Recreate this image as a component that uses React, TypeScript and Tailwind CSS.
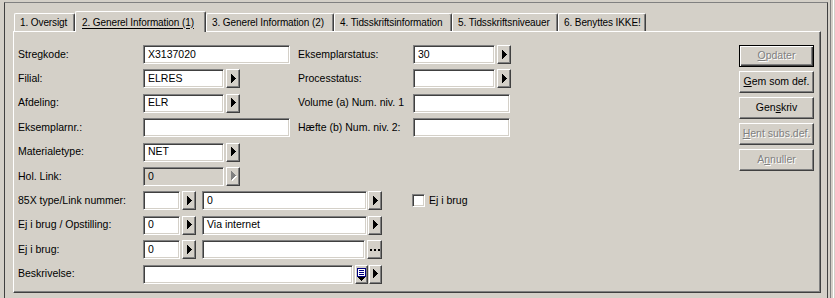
import React from 'react';

const sunken =
  'border border-t-[#808080] border-l-[#808080] border-r-white border-b-white shadow-[inset_1px_1px_#404040,inset_-1px_-1px_#d4d0c8]';
const raised =
  'border border-t-white border-l-white border-r-[#404040] border-b-[#404040] shadow-[inset_-1px_-1px_#808080]';
const greyText = 'text-[#808080] [text-shadow:1px_1px_#ffffff]';

const triPath = 'M0 0h1v1h1v1h1v1h1v1h1v1h-1v1h-1v1h-1v1h-1v1h-1z';

const Tri = ({ disabled }: { disabled?: boolean }) => (
  <svg width="6" height="10" viewBox="0 0 6 10" shapeRendering="crispEdges">
    {disabled && <path d={triPath} transform="translate(1 1)" fill="#ffffff" />}
    <path d={triPath} fill={disabled ? '#808080' : '#000000'} />
  </svg>
);

const ArrowBtn = ({ disabled, w = 'w-[14px]' }: { disabled?: boolean; w?: string }) => (
  <div className={`${w} h-[19px] flex-none flex items-center justify-center pl-[1px] bg-[#d4d0c8] ${raised}`}>
    <Tri disabled={disabled} />
  </div>
);

const Field = ({ w, value, disabled }: { w: string; value?: string; disabled?: boolean }) => (
  <div
    className={`${w} h-[19px] flex-none flex items-center pl-[4px] text-black ${sunken} ${
      disabled ? 'bg-[#d4d0c8]' : 'bg-white'
    }`}
  >
    {value}
  </div>
);

const Label = ({ children, w = 'w-[125px]' }: { children: React.ReactNode; w?: string }) => (
  <div className={`${w} flex-none whitespace-nowrap`}>{children}</div>
);

const Tab = ({ label, w, active }: { label: string; w: string; active?: boolean }) => (
  <div
    className={`${w} flex-none flex items-center whitespace-nowrap text-[10px] tracking-[-0.1px] bg-[#d4d0c8] border-l border-t border-l-white border-t-white border-r border-r-[#404040] shadow-[inset_-1px_0_#808080] rounded-tl-[2px] rounded-tr-[2px] ${
      active ? 'h-[21px] relative z-10 pl-[6px]' : 'h-[18px] mb-[1px] pl-[5px]'
    }`}
  >
    {active ? <span className="underline underline-offset-[2px]">{label}</span> : label}
  </div>
);

const SideButton = ({
  children,
  disabled,
  isDefault,
}: {
  children: React.ReactNode;
  disabled?: boolean;
  isDefault?: boolean;
}) => (
  <div
    className={`w-[75px] h-[22px] flex items-center justify-center bg-[#d4d0c8] ${
      isDefault ? 'border border-black shadow-[inset_1px_1px_#ffffff,inset_-1px_-1px_#404040,inset_-2px_-2px_#808080]' : raised
    } ${disabled ? greyText : 'text-black'}`}
  >
    {children}
  </div>
);

export default function App() {
  return (
    <div className="w-[835px] h-[298px] bg-[#d4d0c8] flex overflow-hidden text-[10.5px] text-black font-['Liberation_Sans',Arial,sans-serif]">
      <div className="flex-none w-[828px] pl-[4px] pt-[2px]">
        <div className="w-[824px] h-[296px] border-l border-t border-r border-l-[#404040] border-t-[#808080] border-r-[#404040]">
          <div className="pt-[8px] pl-[9px] flex items-end h-[29px]">
            <Tab label="1. Oversigt" w="w-[61px]" />
            <Tab label="2. Generel Information (1)" w="w-[131px]" active />
            <Tab label="3. Generel Information (2)" w="w-[128px]" />
            <Tab label="4. Tidsskriftsinformation" w="w-[118px]" />
            <Tab label="5. Tidsskriftsniveauer" w="w-[106px]" />
            <Tab label="6. Benyttes IKKE!" w="w-[88px]" />
          </div>
          <div className="ml-[8px] mt-[-1px] w-[808px] h-[262px] border border-t-white border-l-white border-r-[#404040] border-b-[#404040] shadow-[inset_-1px_-1px_#808080] flex justify-between pt-[13px] pl-[4px] pr-[6px]">
            <div className="flex flex-col gap-[5.4px]">
              <div className="flex items-center h-[19px]">
                <Label>Stregkode:</Label>
                <Field w="w-[147px]" value="X3137020" />
                <div className="w-[8px] flex-none" />
                <Label w="w-[115px]">Eksemplarstatus:</Label>
                <Field w="w-[82px]" value="30" />
                <div className="ml-[2px]"><ArrowBtn /></div>
              </div>
              <div className="flex items-center h-[19px]">
                <Label>Filial:</Label>
                <div className="w-[155px] flex-none flex items-center">
                  <Field w="w-[81px]" value="ELRES" />
                  <div className="ml-[2px]"><ArrowBtn /></div>
                </div>
                <Label w="w-[115px]">Processtatus:</Label>
                <Field w="w-[82px]" />
                <div className="ml-[2px]"><ArrowBtn /></div>
              </div>
              <div className="flex items-center h-[19px]">
                <Label>Afdeling:</Label>
                <div className="w-[155px] flex-none flex items-center">
                  <Field w="w-[81px]" value="ELR" />
                  <div className="ml-[2px]"><ArrowBtn /></div>
                </div>
                <Label w="w-[115px]">Volume (a) Num. niv. 1</Label>
                <Field w="w-[97px]" />
              </div>
              <div className="flex items-center h-[19px]">
                <Label>Eksemplarnr.:</Label>
                <Field w="w-[147px]" />
                <div className="w-[8px] flex-none" />
                <Label w="w-[115px]">Hæfte (b) Num. niv. 2:</Label>
                <Field w="w-[97px]" />
              </div>
              <div className="flex items-center h-[19px]">
                <Label>Materialetype:</Label>
                <Field w="w-[81px]" value="NET" />
                <div className="ml-[2px]"><ArrowBtn /></div>
              </div>
              <div className="flex items-center h-[19px]">
                <Label>Hol. Link:</Label>
                <Field w="w-[81px]" value="0" disabled />
                <div className="ml-[2px]"><ArrowBtn disabled /></div>
              </div>
              <div className="flex items-center h-[19px]">
                <Label>85X type/Link nummer:</Label>
                <Field w="w-[37px]" />
                <div className="ml-[2px]"><ArrowBtn /></div>
                <div className="ml-[6px]"><Field w="w-[165px]" value="0" /></div>
                <div className="ml-[1px]"><ArrowBtn /></div>
                <div className={`ml-[30px] w-[13px] h-[13px] bg-white ${sunken}`} />
                <div className="ml-[4px] whitespace-nowrap">Ej i brug</div>
              </div>
              <div className="flex items-center h-[19px]">
                <Label>Ej i brug / Opstilling:</Label>
                <Field w="w-[37px]" value="0" />
                <div className="ml-[2px]"><ArrowBtn /></div>
                <div className="ml-[6px]"><Field w="w-[165px]" value="Via internet" /></div>
                <div className="ml-[1px]"><ArrowBtn /></div>
              </div>
              <div className="flex items-center h-[19px]">
                <Label>Ej i brug:</Label>
                <Field w="w-[37px]" value="0" />
                <div className="ml-[2px]"><ArrowBtn /></div>
                <div className="ml-[6px]"><Field w="w-[163px]" /></div>
                <div className={`ml-[2px] w-[15px] h-[19px] flex-none flex items-center justify-center gap-[2px] bg-[#d4d0c8] ${raised}`}>
                  <div className="w-[2px] h-[2px] bg-black" />
                  <div className="w-[2px] h-[2px] bg-black" />
                  <div className="w-[2px] h-[2px] bg-black" />
                </div>
              </div>
              <div className="flex items-center h-[19px]">
                <Label>Beskrivelse:</Label>
                <Field w="w-[210px]" />
                <div className={`ml-[2px] w-[13px] h-[19px] flex-none flex items-center justify-center bg-[#d4d0c8] ${raised}`}>
                  <svg width="9" height="13" viewBox="0 0 9 13" shapeRendering="crispEdges">
                    <rect x="0.5" y="0.5" width="8" height="8" fill="#ffffff" stroke="#000080" />
                    <path d="M2 2.5h5M2 4.5h5M2 6.5h5" stroke="#000080" />
                    <path d="M1 9h7v1h-1v1h-1v1h-1v1h-1v-1h-1v-1h-1v-1h-1z" fill="#000000" />
                  </svg>
                </div>
                <div className="ml-[1px]"><ArrowBtn w="w-[13px]" /></div>
              </div>
            </div>
            <div className="flex flex-col gap-[4px]">
              <SideButton disabled isDefault>
                <span><u>O</u>pdater</span>
              </SideButton>
              <SideButton>
                <span><u>G</u>em som def.</span>
              </SideButton>
              <SideButton>
                <span>Gen<u>s</u>kriv</span>
              </SideButton>
              <SideButton disabled>
                <span><u>H</u>ent subs.def.</span>
              </SideButton>
              <SideButton disabled>
                <span>A<u>n</u>nuller</span>
              </SideButton>
            </div>
          </div>
        </div>
      </div>
      <div className="flex-none w-[7px] flex">
        <div className="w-[2px]" />
        <div className="w-[1px] bg-[#808080]" />
        <div className="w-[2px]" />
        <div className="w-[1px] bg-white" />
      </div>
    </div>
  );
}
